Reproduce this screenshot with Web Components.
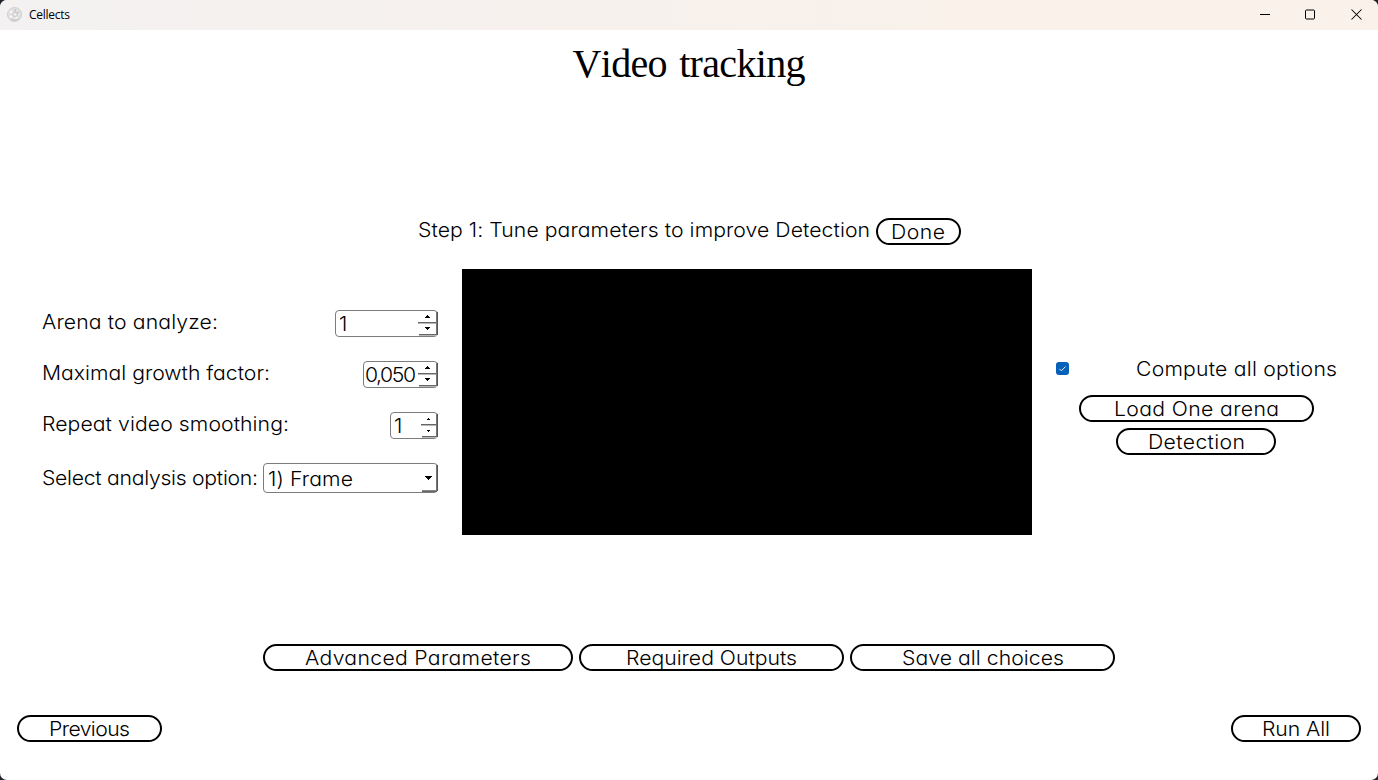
<!DOCTYPE html>
<html lang="en">
<head>
<meta charset="utf-8">
<title>Cellects</title>
<style>
html,body{margin:0;height:100%;overflow:hidden;background:#20242c}
</style>
</head>
<body>
<cellects-window></cellects-window>
<script>
// Text set to a given advance width: letters are widened by --stretch, the rest is spread between them.
class FitText extends HTMLElement{
  connectedCallback(){
    const r=this.attachShadow({mode:'open'});
    r.innerHTML=`<style>:host{display:block;flex:none;white-space:pre;text-align:left;width:${this.getAttribute('w')}px}
      span{display:inline-block;white-space:pre;transform-origin:0 50%}</style><span></span>`;
    const s=r.querySelector('span');
    s.textContent=this.getAttribute('text');
    const k=parseFloat(getComputedStyle(this).getPropertyValue('--stretch'))||1;
    const n=s.textContent.length,w=this.getAttribute('w')/k;
    const d=n>1?(w-s.getBoundingClientRect().width)/(n-1):0;
    s.style.letterSpacing=d+'px';
    if(k!==1)s.style.transform=`scaleX(${k})`;
  }
}
customElements.define('fit-text',FitText);

class PillButton extends HTMLElement{
  connectedCallback(){
    this.attachShadow({mode:'open'}).innerHTML=`<style>
      :host{display:block;flex:none;width:${this.getAttribute('w')}px;height:27px}
      button{box-sizing:border-box;display:flex;align-items:center;justify-content:center;width:100%;height:100%;margin:0;padding:2px 0 0;
        border:2px solid #000;border-radius:13.5px;background:#fff;color:#000;font:inherit;line-height:23px;font-feature-settings:inherit}
      </style><button><slot></slot></button>`;
  }
}
customElements.define('pill-button',PillButton);

class SpinBox extends HTMLElement{
  connectedCallback(){
    const small=this.hasAttribute('small');
    const a=small?`<path d="M7 6h1v1h1v1H6V7h1z"/><path d="M6 18h3v1H8v1H7v-1H6z"/>`
      :`<path d="M9 5h1v1h1v1h1v1H7V7h1V6h1z"/><path d="M7 17h5v1h-1v1h-1v1H9v-1H8v-1H7z"/>`;
    const k=small?17:20;
    this.attachShadow({mode:'open'}).innerHTML=`<style>
      :host{box-sizing:border-box;display:flex;flex:none;justify-content:space-between;width:${this.getAttribute('w')}px;height:27px;
        border:1px solid #7c7c7c;border-radius:4px;background:#fff;line-height:27px;padding-left:${this.getAttribute('pad')||3}px}
      svg{display:block;flex:none;margin:-1px -1px 0 0}
      </style><slot></slot><svg width="${k}" height="27" viewBox="0 0 ${k} 27" shape-rendering="crispEdges">
      <path d="M0 12h${k-1}v1H0zM1 24h${k-2}v1H1z" fill="#666"/>
      <path d="M0 13h${k-2}v1H0zM1 25h${k-2}v1H1z" fill="#b8b8b8"/><path d="M${k-2} 2h1v23h-1z" fill="#777"/><path d="M${k-1} 2h1v23h-1z" fill="#555"/>${a}</svg>`;
  }
}
customElements.define('spin-box',SpinBox);

class ComboBox extends HTMLElement{
  connectedCallback(){
    this.attachShadow({mode:'open'}).innerHTML=`<style>
      :host{box-sizing:border-box;display:flex;flex:none;justify-content:space-between;width:${this.getAttribute('w')}px;height:30px;
        border:1px solid #7c7c7c;border-radius:4px;background:#fff;line-height:30px;padding-left:4px}
      svg{display:block;flex:none;margin:-1px -1px 0 0}
      </style><slot></slot><svg width="17" height="30" viewBox="0 0 17 30" shape-rendering="crispEdges">
      <path d="M1 27h15v1H1z" fill="#888"/><path d="M1 28h15v1H1z" fill="#666"/><path d="M15 2h1v26h-1z" fill="#777"/><path d="M16 2h1v26h-1z" fill="#555"/>
      <path d="M4 13h7v1h-1v1H9v1H8v1H7v-1H6v-1H5v-1H4z"/></svg>`;
  }
}
customElements.define('combo-box',ComboBox);

class CheckBox extends HTMLElement{
  connectedCallback(){
    this.attachShadow({mode:'open'}).innerHTML=`<style>:host{display:block;flex:none;width:13px;height:13px}svg{display:block}</style>
      <svg width="13" height="13" viewBox="0 0 13 13"><rect width="13" height="13" rx="3" fill="#0560b8"/>
      <path d="M3.4 6.8l2 2 4.2-4.3" fill="none" stroke="#fff" stroke-width=".9"/></svg>`;
  }
}
customElements.define('check-box',CheckBox);

class TitleBar extends HTMLElement{
  connectedCallback(){
    this.attachShadow({mode:'open'}).innerHTML=`<style>
      :host{display:flex;flex:none;align-items:center;box-sizing:border-box;height:30px;padding:0 16px 0 7px;--stretch:1;
        background:linear-gradient(90deg,#f3f1f1,#f6f1ee 35%,#f9f1ea 70%);font:12px/30px "Open Sans","Noto Sans",sans-serif;font-feature-settings:normal;color:#000}
      .logo{margin:-2px 7px 0 0}svg{display:block;flex:none}
      .ctl{display:flex;margin:-2px 0 0 auto;align-items:center}
      .ctl svg:nth-child(-n+2){margin-right:35px}.ctl svg:nth-child(2){margin-right:36px}
      </style>
      <svg class="logo" width="15" height="15" viewBox="0 0 15 15"><circle cx="7.5" cy="7.5" r="7" fill="#e2e2e2" stroke="#c6c6c6" stroke-width=".8"/>
        <path d="M2.5 4.5l3 1M3 10l2-1M10 12L8.5 10" stroke="#fafafa" stroke-width="1.8"/>
        <path d="M8.5 2l-.5 3M12 5l-2 1" stroke="#c4c4c4" stroke-width="1.2"/>
        <path d="M4 12.4q4 2 7.5-.6" fill="none" stroke="#bbb" stroke-width=".9"/>
        <circle cx="8" cy="7.3" r="2.2" fill="#efefef" stroke="#bdbdbd" stroke-width=".8"/></svg>
      <fit-text w="41" text="Cellects"></fit-text>
      <div class="ctl">
        <svg width="10" height="11"><path d="M0 5.5h10" stroke="#000" shape-rendering="crispEdges"/></svg>
        <svg width="10" height="11" viewBox="0 0 10 11"><rect x=".5" y="1" width="9" height="9" rx="1" fill="none" stroke="#000"/></svg>
        <svg width="11" height="11"><path d="M.5.5l10 10M10.5.5l-10 10" stroke="#000" stroke-width="1.05"/></svg>
      </div>`;
  }
}
customElements.define('title-bar',TitleBar);

class CellectsWindow extends HTMLElement{
  connectedCallback(){
    this.attachShadow({mode:'open'}).innerHTML=`<style>
      :host{display:flex;flex-direction:column;width:1378px;height:780px;background:#fff;border-radius:7px;overflow:hidden;color:#000;--stretch:1.06;
        font:300 20px/27px Inter,"Open Sans",sans-serif;font-feature-settings:"cv11"}
      h1{margin:10px 0 0;font:400 40px/48px "Liberation Serif",serif;font-kerning:none;word-spacing:3px;--stretch:1;display:flex;justify-content:center}
      .step{display:flex;justify-content:center;gap:6px;margin:130px 0 24px}
      .step>fit-text,.row>fit-text{margin-top:-1px}
      main{display:grid;grid-template-columns:396px 570px 281px;column-gap:24px;margin-left:42px;height:266px}
      .form{display:flex;flex-direction:column;gap:24px;padding-top:41px}
      .row{display:flex;justify-content:space-between}
      .row:last-child>fit-text{margin-top:2px}
      .video{background:#000}
      .side{display:flex;flex-direction:column;align-items:center;gap:6px;padding-top:86px}
      .opt{display:flex;align-items:center;justify-content:space-between;width:281px;height:27px;margin-bottom:7px}
      .opt fit-text{padding-top:2px}
      .side pill-button:last-child{margin-right:1px}
      .tools{display:flex;justify-content:center;gap:6px;margin-top:109px}
      nav{display:flex;justify-content:space-between;padding:0 17px;margin-top:44px}
      </style>
      <title-bar></title-bar>
      <h1><fit-text w="233" text="Video tracking"></fit-text></h1>
      <div class="step"><fit-text w="452" text="Step 1: Tune parameters to improve Detection"></fit-text><pill-button w="85"><fit-text w="54" text="Done"></fit-text></pill-button></div>
      <main>
        <div class="form">
          <div class="row"><fit-text w="176" text="Arena to analyze:"></fit-text><spin-box w="103"><fit-text w="9" text="1"></fit-text></spin-box></div>
          <div class="row"><fit-text w="228" text="Maximal growth factor:"></fit-text><spin-box w="75" pad="1"><fit-text w="51" text="0,050"></fit-text></spin-box></div>
          <div class="row"><fit-text w="247" text="Repeat video smoothing:"></fit-text><spin-box w="48" small><fit-text w="9" text="1"></fit-text></spin-box></div>
          <div class="row"><fit-text w="216" text="Select analysis option:"></fit-text><combo-box w="175"><fit-text w="85" text="1) Frame"></fit-text></combo-box></div>
        </div>
        <div class="video"></div>
        <div class="side">
          <div class="opt"><check-box></check-box><fit-text w="201" text="Compute all options"></fit-text></div>
          <pill-button w="235"><fit-text w="165" text="Load One arena"></fit-text></pill-button>
          <pill-button w="160"><fit-text w="97" text="Detection"></fit-text></pill-button>
        </div>
      </main>
      <div class="tools">
        <pill-button w="310"><fit-text w="226" text="Advanced Parameters"></fit-text></pill-button>
        <pill-button w="265"><fit-text w="171" text="Required Outputs"></fit-text></pill-button>
        <pill-button w="265"><fit-text w="162" text="Save all choices"></fit-text></pill-button>
      </div>
      <nav><pill-button w="145"><fit-text w="81" text="Previous"></fit-text></pill-button><pill-button w="130"><fit-text w="68" text="Run All"></fit-text></pill-button></nav>`;
  }
}
customElements.define('cellects-window',CellectsWindow);
</script>
</body>
</html>
